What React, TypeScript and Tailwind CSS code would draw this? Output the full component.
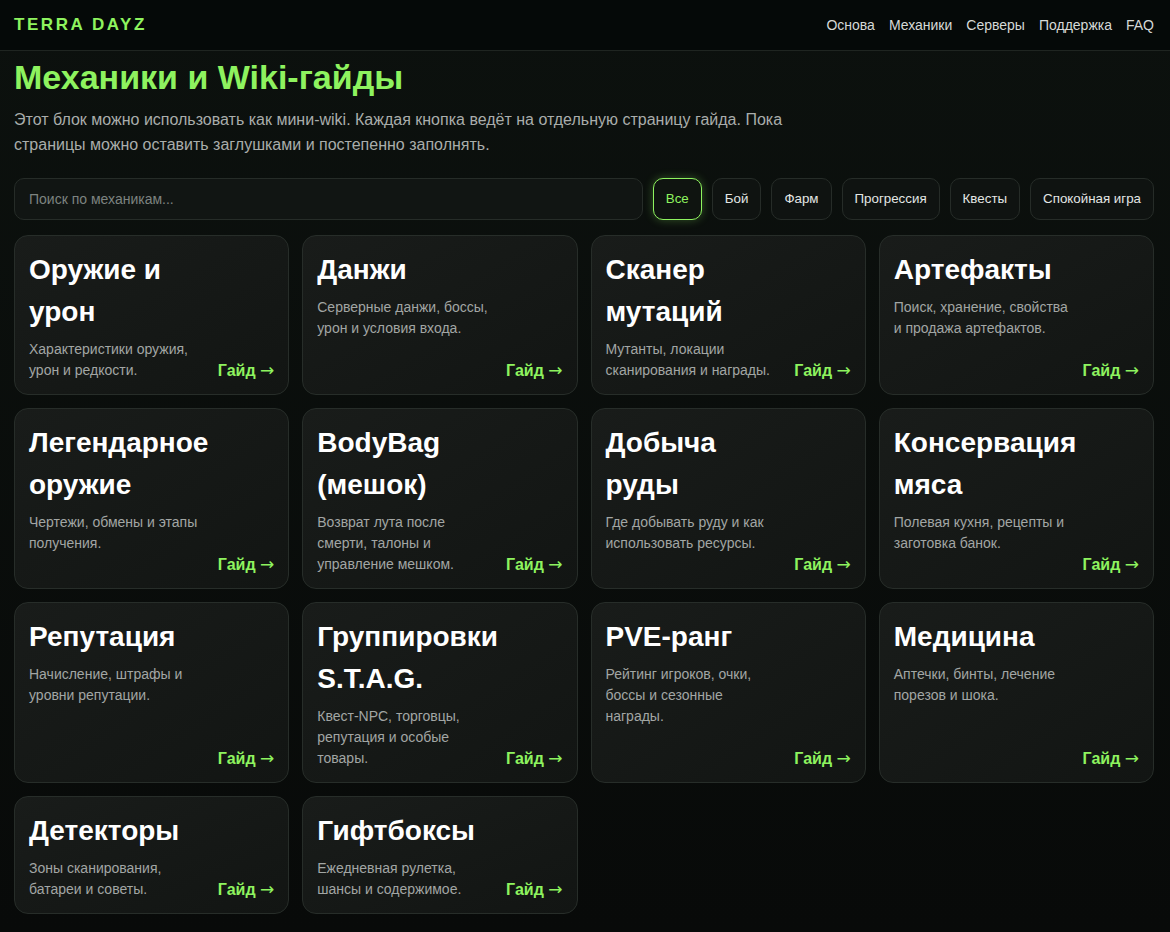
import { useState } from "react";

type Guide = { title: string; desc: string };

const guides: Guide[] = [
  { title: "Оружие и урон", desc: "Характеристики оружия, урон и редкости." },
  { title: "Данжи", desc: "Серверные данжи, боссы, урон и условия входа." },
  { title: "Сканер мутаций", desc: "Мутанты, локации сканирования и награды." },
  { title: "Артефакты", desc: "Поиск, хранение, свойства и продажа артефактов." },
  { title: "Легендарное оружие", desc: "Чертежи, обмены и этапы получения." },
  { title: "BodyBag (мешок)", desc: "Возврат лута после смерти, талоны и управление мешком." },
  { title: "Добыча руды", desc: "Где добывать руду и как использовать ресурсы." },
  { title: "Консервация мяса", desc: "Полевая кухня, рецепты и заготовка банок." },
  { title: "Репутация", desc: "Начисление, штрафы и уровни репутации." },
  { title: "Группировки S.T.A.G.", desc: "Квест-NPC, торговцы, репутация и особые товары." },
  { title: "PVE-ранг", desc: "Рейтинг игроков, очки, боссы и сезонные награды." },
  { title: "Медицина", desc: "Аптечки, бинты, лечение порезов и шока." },
  { title: "Детекторы", desc: "Зоны сканирования, батареи и советы." },
  { title: "Гифтбоксы", desc: "Ежедневная рулетка, шансы и содержимое." },
];

const filters = ["Все", "Бой", "Фарм", "Прогрессия", "Квесты", "Спокойная игра"];
const nav = ["Основа", "Механики", "Серверы", "Поддержка", "FAQ"];

export default function App() {
  const [active, setActive] = useState("Все");
  const [query, setQuery] = useState("");

  return (
    <div className="min-h-[932px] bg-gradient-to-b from-[#0c110e] to-[#080a09] text-white font-['Liberation_Sans',Arial,sans-serif]">
      <header className="h-[51px] bg-[#050908] border-b border-[#1f2521] flex items-center justify-between pl-[14px] pr-[16px]">
        <div className="text-[#8ef35f] font-bold text-[17px] tracking-[0.15em]">TERRA DAYZ</div>
        <nav className="flex items-center gap-[14px] text-[14px] text-[#d6d9d7]">
          {nav.map((n) => (
            <a key={n} href="#" className="hover:text-white">{n}</a>
          ))}
        </nav>
      </header>

      <main className="px-[14px] pt-[6px] pb-4">
        <h1 className="text-[#8ef35f] font-bold text-[34px] leading-[40px]">Механики и Wiki-гайды</h1>
        <p className="mt-[10px] text-[16px] leading-[25px] text-[#a9adab] max-w-[800px]">
          Этот блок можно использовать как мини-wiki. Каждая кнопка ведёт на отдельную страницу гайда. Пока страницы можно оставить заглушками и постепенно заполнять.
        </p>

        <div className="mt-[21px] w-[1140px] flex items-center gap-[10px]">
          <input
            value={query}
            onChange={(e) => setQuery(e.target.value)}
            placeholder="Поиск по механикам..."
            className="flex-1 min-w-0 h-[42px] rounded-[10px] border border-[#262c28] bg-[#111513] px-[14px] text-[14px] text-white placeholder:text-[#7d8380] outline-none"
          />
          {filters.map((f) => (
            <button
              key={f}
              onClick={() => setActive(f)}
              className={
                f === active
                  ? "h-[42px] px-[12px] rounded-[10px] border border-[#8ef35f] bg-[#0f1410] text-[#8ef35f] text-[13.33px] shadow-[0_0_10px_rgba(142,243,95,0.3)]"
                  : "h-[42px] px-[12px] rounded-[10px] border border-[#262c28] bg-[#0f1311] text-[#e3e6e4] text-[13.33px]"
              }
            >
              {f}
            </button>
          ))}
        </div>

        <div className="mt-[15px] w-[1140px] grid grid-cols-4 gap-[13px]">
          {guides
            .filter((g) => (g.title + g.desc).toLowerCase().includes(query.toLowerCase()))
            .map((g) => (
              <div
                key={g.title}
                className="flex justify-between gap-2 rounded-[14px] border border-[#272d29] bg-gradient-to-br from-[#191c1a] to-[#121513] px-[14px] py-[13px]"
              >
                <div className="w-[182px] min-w-0">
                  <h2 className="font-bold text-[28px] leading-[42px] text-white">{g.title}</h2>
                  <p className="mt-[6px] text-[14px] leading-[21px] text-[#a2a6a4] max-w-[178px]">{g.desc}</p>
                </div>
                <a href="#" className="self-end shrink-0 text-[#8ef35f] font-bold text-[16px] leading-[21px] whitespace-nowrap">
                  Гайд <span className="font-['DejaVu_Sans',sans-serif] font-normal text-[17px]">→</span>
                </a>
              </div>
            ))}
        </div>
      </main>
    </div>
  );
}
